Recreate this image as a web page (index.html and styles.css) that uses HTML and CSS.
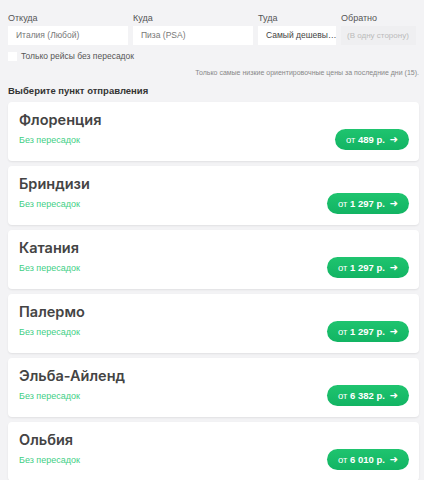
FILE: index.html
```html
<!DOCTYPE html>
<html lang="ru">
<head>
  <meta charset="UTF-8" />
  <meta name="viewport" content="width=device-width, initial-scale=1.0"/>
  <title>Дешёвые рейсы | Пиза</title>
  <link rel="stylesheet" href="styles.css">
</head>
<body>
<!-- Search form -->
  <div class="search">
    <div class="field">
      <label>Откуда</label>
      <div class="input">Италия (Любой)</div>
    </div>
    <div class="field">
      <label>Куда</label>
      <div class="input">Пиза (PSA)</div>
    </div>
    <div class="field">
      <label>Туда</label>
      <div class="input dark">Самый дешевы…</div>
    </div>
    <div class="field">
      <label>Обратно</label>
      <div class="input empty">(В одну сторону)</div>
    </div>
  </div>

  <label class="direct"><span class="box"></span>Только рейсы без пересадок</label>

  <p class="note">Только самые низкие ориентировочные цены за последние дни (15).</p>

  <h2>Выберите пункт отправления</h2>

  <!-- Destinations -->
  <div class="list">
    <div class="card">
      <div>
        <h3>Флоренция</h3>
        <p class="stops">Без пересадок</p>
      </div>
      <a href="#" class="price">от <b>489 р.</b> <span class="arrow">➜</span></a>
    </div>
    <div class="card">
      <div>
        <h3>Бриндизи</h3>
        <p class="stops">Без пересадок</p>
      </div>
      <a href="#" class="price">от <b>1 297 р.</b> <span class="arrow">➜</span></a>
    </div>
    <div class="card">
      <div>
        <h3>Катания</h3>
        <p class="stops">Без пересадок</p>
      </div>
      <a href="#" class="price">от <b>1 297 р.</b> <span class="arrow">➜</span></a>
    </div>
    <div class="card">
      <div>
        <h3>Палермо</h3>
        <p class="stops">Без пересадок</p>
      </div>
      <a href="#" class="price">от <b>1 297 р.</b> <span class="arrow">➜</span></a>
    </div>
    <div class="card">
      <div>
        <h3>Эльба-Айленд</h3>
        <p class="stops">Без пересадок</p>
      </div>
      <a href="#" class="price">от <b>6 382 р.</b> <span class="arrow">➜</span></a>
    </div>
    <div class="card">
      <div>
        <h3>Ольбия</h3>
        <p class="stops">Без пересадок</p>
      </div>
      <a href="#" class="price">от <b>6 010 р.</b> <span class="arrow">➜</span></a>
    </div>
  </div>
</body>
</html>
```

FILE: styles.css
```css
html {
  overflow: hidden;
}

body {
  margin: 0;
  padding: 12px 5px 8px 8px;
  background-color: #f3f3f5;
  font-family: 'Liberation Sans', Arial, sans-serif;
  color: #333;
}

/* Search form */
.search {
  display: grid;
  grid-template-columns: 120px 120px 78px 75px;
  gap: 5px;
}

.field label {
  display: block;
  font-size: 9px;
  color: #555;
  height: 14px;
  line-height: 12px;
}

.input {
  height: 19px;
  line-height: 19px;
  background-color: white;
  font-size: 8.5px;
  color: #777;
  padding: 0 8px;
  white-space: nowrap;
  overflow: hidden;
}

.input.dark {
  color: #444;
}

.input.empty {
  background-color: #efeff1;
  color: #bbb;
  font-size: 8px;
  padding: 0 6px;
}

.direct {
  display: flex;
  align-items: center;
  gap: 4px;
  margin-top: 6px;
  font-size: 8.5px;
  color: #555;
  height: 10px;
}

.box {
  width: 9px;
  height: 9px;
  background-color: white;
}

.note {
  margin: 8px 0 0;
  text-align: right;
  font-size: 7px;
  color: #888;
}

h2 {
  margin: 9px 0 6px;
  font-size: 9.5px;
  font-weight: bold;
  color: #333;
}

/* Destinations */
.card {
  background: white;
  height: 59px;
  box-sizing: border-box;
  margin-bottom: 5px;
  padding: 0 10px 11px 11px;
  border-radius: 4px;
  box-shadow: 0 1px 2px rgba(0,0,0,0.08);
  display: flex;
  align-items: flex-end;
  justify-content: space-between;
}

.card h3 {
  margin: 0 0 7px;
  font-family: Inter, 'Liberation Sans', sans-serif;
  font-size: 14.5px;
  font-weight: 600;
  color: #444;
}

.stops {
  margin: 0 0 5px;
  font-size: 9px;
  color: #3fcf86;
}

.price {
  height: 21px;
  line-height: 21px;
  padding: 0 11px;
  border-radius: 11px;
  background: linear-gradient(#1fc46f, #12b463);
  color: white;
  text-decoration: none;
  font-size: 9.5px;
  white-space: nowrap;
}

.price b {
  font-weight: 700;
}

.arrow {
  font-family: 'DejaVu Sans', sans-serif;
  font-weight: bold;
  font-size: 10px;
  margin-left: 2px;
}
```
